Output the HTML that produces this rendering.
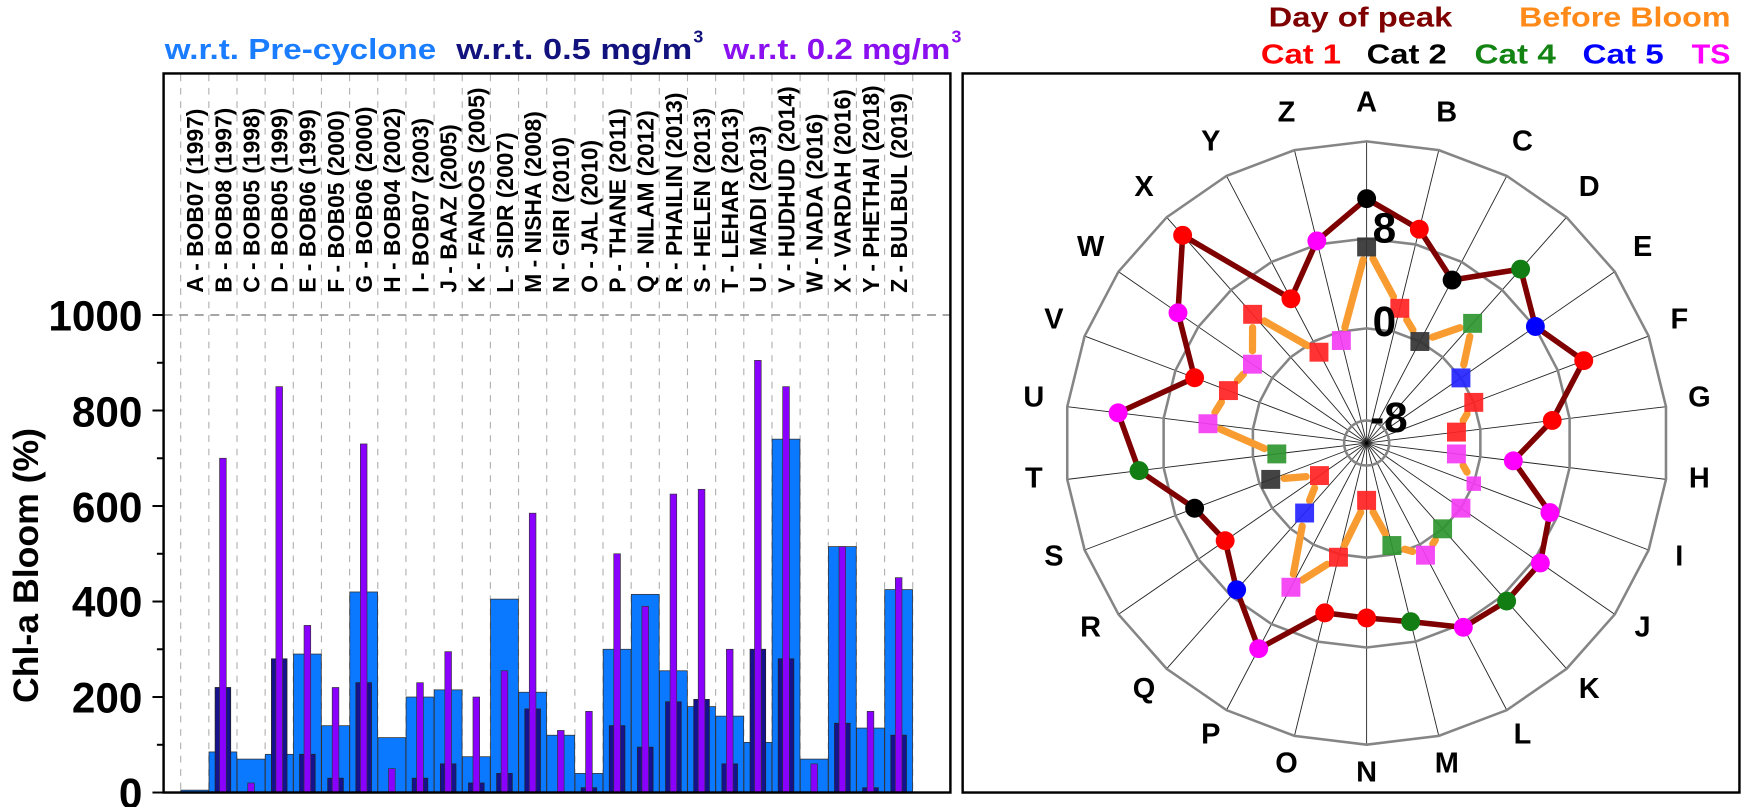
<!DOCTYPE html>
<html><head><meta charset="utf-8"><style>
html,body{margin:0;padding:0;background:#fff;overflow:hidden}
svg{display:block}
text{font-family:"Liberation Sans",Arial,sans-serif;font-weight:bold}
</style></head><body>
<svg id="s" width="1745" height="807" viewBox="0 0 1568 725" preserveAspectRatio="none" xmlns="http://www.w3.org/2000/svg">
<rect x="0" y="0" width="1568" height="725" fill="#fff"/>
<text x="148" y="53" font-size="26" fill="#1a7dff" textLength="244" lengthAdjust="spacingAndGlyphs">w.r.t. Pre-cyclone</text>
<text x="410" y="53" font-size="26" fill="#12127e" textLength="212" lengthAdjust="spacingAndGlyphs">w.r.t.  0.5 mg/m</text>
<text x="623" y="38" font-size="16" fill="#12127e">3</text>
<text x="650" y="53" font-size="26" fill="#8a10f0" textLength="204" lengthAdjust="spacingAndGlyphs">w.r.t. 0.2 mg/m</text>
<text x="855" y="38" font-size="16" fill="#8a10f0">3</text>
<text x="1140" y="24" font-size="25" fill="#7f0000" textLength="165" lengthAdjust="spacingAndGlyphs">Day of peak</text>
<text x="1365" y="24" font-size="25" fill="#ff8a1a" textLength="190" lengthAdjust="spacingAndGlyphs">Before Bloom</text>
<text x="1133" y="57" font-size="25" fill="#ff0000" textLength="72" lengthAdjust="spacingAndGlyphs">Cat 1</text>
<text x="1228" y="57" font-size="25" fill="#000" textLength="72" lengthAdjust="spacingAndGlyphs">Cat 2</text>
<text x="1325" y="57" font-size="25" fill="#138413" textLength="73" lengthAdjust="spacingAndGlyphs">Cat 4</text>
<text x="1422" y="57" font-size="25" fill="#0000ff" textLength="73" lengthAdjust="spacingAndGlyphs">Cat 5</text>
<text x="1520" y="57" font-size="25" fill="#ff00ff" textLength="35" lengthAdjust="spacingAndGlyphs">TS</text>

<g id="grid"></g>
<line x1="147" y1="283" x2="854" y2="283" stroke="#888" stroke-width="1.3" stroke-dasharray="8,6"/>
<g id="bars"></g>
<rect x="147" y="66" width="707" height="646" fill="none" stroke="#000" stroke-width="2.2"/>
<g id="ticks"></g>
<g font-size="38" text-anchor="end" fill="#000">
<text x="128" y="726">0</text>
<text x="128" y="640">200</text>
<text x="128" y="554">400</text>
<text x="128" y="469">600</text>
<text x="128" y="383">800</text>
<text x="128" y="297">1000</text>
</g>
<text transform="translate(34,508) rotate(-90)" font-size="32" text-anchor="middle">Chl-a Bloom (%)</text>
<g font-size="20.5" fill="#000">
<text transform="translate(182.5,263) rotate(-90)">A - BOB07 (1997)</text>
<text transform="translate(207.8,263) rotate(-90)">B - BOB08 (1997)</text>
<text transform="translate(233.1,263) rotate(-90)">C - BOB05 (1998)</text>
<text transform="translate(258.4,263) rotate(-90)">D - BOB05 (1999)</text>
<text transform="translate(283.7,263) rotate(-90)">E - BOB06 (1999)</text>
<text transform="translate(309,263) rotate(-90)">F - BOB05 (2000)</text>
<text transform="translate(334.3,263) rotate(-90)">G - BOB06 (2000)</text>
<text transform="translate(359.6,263) rotate(-90)">H - BOB04 (2002)</text>
<text transform="translate(384.9,263) rotate(-90)">I - BOB07 (2003)</text>
<text transform="translate(410.2,263) rotate(-90)">J - BAAZ (2005)</text>
<text transform="translate(435.5,263) rotate(-90)">K - FANOOS (2005)</text>
<text transform="translate(460.8,263) rotate(-90)">L - SIDR (2007)</text>
<text transform="translate(486.1,263) rotate(-90)">M - NISHA (2008)</text>
<text transform="translate(511.4,263) rotate(-90)">N - GIRI (2010)</text>
<text transform="translate(536.7,263) rotate(-90)">O - JAL (2010)</text>
<text transform="translate(562,263) rotate(-90)">P - THANE (2011)</text>
<text transform="translate(587.3,263) rotate(-90)">Q - NILAM (2012)</text>
<text transform="translate(612.6,263) rotate(-90)">R - PHAILIN (2013)</text>
<text transform="translate(637.9,263) rotate(-90)">S - HELEN (2013)</text>
<text transform="translate(663.2,263) rotate(-90)">T - LEHAR (2013)</text>
<text transform="translate(688.5,263) rotate(-90)">U - MADI (2013)</text>
<text transform="translate(713.8,263) rotate(-90)">V - HUDHUD (2014)</text>
<text transform="translate(739.1,263) rotate(-90)">W - NADA (2016)</text>
<text transform="translate(764.4,263) rotate(-90)">X - VARDAH (2016)</text>
<text transform="translate(789.7,263) rotate(-90)">Y - PHETHAI (2018)</text>
<text transform="translate(815,263) rotate(-90)">Z - BULBUL (2019)</text>
</g>

<rect x="865" y="66" width="698" height="646" fill="none" stroke="#000" stroke-width="2.2"/>
<g id="polar"></g>
<g font-size="38" fill="#000" text-anchor="middle">
<text x="1244" y="218">8</text>
<text x="1244" y="302">0</text>
<text x="1248" y="388">-8</text>
</g>
<g font-size="26" text-anchor="middle" fill="#000">
<text x="1228" y="100">A</text><text x="1300" y="109">B</text><text x="1368" y="135">C</text>
<text x="1428" y="176">D</text><text x="1476" y="230">E</text><text x="1509" y="295">F</text>
<text x="1527" y="365">G</text><text x="1527" y="438">H</text><text x="1509" y="508">I</text>
<text x="1476" y="572">J</text><text x="1428" y="627">K</text><text x="1368" y="668">L</text>
<text x="1300" y="694">M</text><text x="1228" y="702">N</text><text x="1156" y="694">O</text>
<text x="1088" y="668">P</text><text x="1028" y="627">Q</text><text x="980" y="572">R</text>
<text x="947" y="508">S</text><text x="929" y="438">T</text><text x="929" y="365">U</text>
<text x="947" y="295">V</text><text x="980" y="230">W</text><text x="1028" y="176">X</text>
<text x="1088" y="135">Y</text><text x="1156" y="109">Z</text>
</g>
</svg>
<script>
(function(){
var NS="http://www.w3.org/2000/svg";
function el(p,t,a){var e=document.createElementNS(NS,t);for(var k in a)e.setAttribute(k,a[k]);p.appendChild(e);return e;}
var grid=document.getElementById('grid'),bars=document.getElementById('bars'),ticks=document.getElementById('ticks');
var sp=25.3,x0=175;
for(var i=0;i<=26;i++){var x=x0+(i-0.5)*sp;if(x>148&&x<853)el(grid,'line',{x1:x,y1:67,x2:x,y2:711,stroke:'#b0b0b0','stroke-width':1,'stroke-dasharray':'6,6'});}
function Y(v){return 712-v*0.429;}
var blue=[5,85,70,80,290,140,420,115,200,215,75,405,210,120,40,300,415,255,180,160,105,740,70,515,135,425];
var navy=[0,220,0,280,80,30,230,0,30,60,20,40,175,0,10,140,95,190,195,60,300,280,0,145,10,120];
var purp=[0,700,20,850,350,220,730,50,230,295,200,255,585,130,170,500,390,625,635,300,905,850,60,515,170,450];
for(var i=0;i<26;i++){var c=x0+i*sp;
 if(blue[i]>0)el(bars,'rect',{x:c-12.5,y:Y(blue[i]),width:25,height:blue[i]*0.429,fill:'#0a78ff',stroke:'#333','stroke-width':0.7});
 if(navy[i]>0)el(bars,'rect',{x:c-7,y:Y(navy[i]),width:14,height:navy[i]*0.429,fill:'#16128f',stroke:'#222','stroke-width':0.7});
 if(purp[i]>0)el(bars,'rect',{x:c-3,y:Y(purp[i]),width:6,height:purp[i]*0.429,fill:'#8a00ff',stroke:'#333','stroke-width':0.6});
}
for(var v=0;v<=1000;v+=100){el(ticks,'line',{x1:v%200==0?137:141,y1:Y(v),x2:147,y2:Y(v),stroke:'#000','stroke-width':1.8});}
var P=document.getElementById('polar');var cx=1228,cy=398,R=271;
function pt(k,f){var a=k*2*Math.PI/26;return [cx+R*f*Math.sin(a),cy-R*f*Math.cos(a)];}
for(var k=0;k<26;k++){var p=pt(k,1);el(P,'line',{x1:cx,y1:cy,x2:p[0],y2:p[1],stroke:'#222','stroke-width':0.8});}
[1,0.678,0.38,0.075].forEach(function(f){var s=[];for(var k=0;k<26;k++){var p=pt(k,f);s.push(p[0].toFixed(1)+','+p[1].toFixed(1));}
 el(P,'polygon',{points:s.join(' '),fill:'none',stroke:'#858585','stroke-width':2.3});});
var rc=[0.81,0.73,0.61,0.77,0.68,0.77,0.62,0.49,0.65,0.70,0.70,0.69,0.61,0.58,0.58,0.77,0.65,0.57,0.61,0.76,0.83,0.61,0.76,0.92,0.54,0.69];
var rs=[0.65,0.46,0.38,0.53,0.38,0.38,0.30,0.30,0.38,0.38,0.38,0.42,0.35,0.19,0.39,0.54,0.31,0.19,0.34,0.30,0.53,0.49,0.46,0.57,0.34,0.35];
var cat="krkgbrrmmmgmgrrmbrkgmrmrrm";
var cc={k:'#000',r:'#ff0000',g:'#127d12',b:'#0000ff',m:'#ff00ff'};
var sc={k:'#333',r:'#f22',g:'#2f962f',b:'#2424ff',m:'#f43cf4'};
for(var k=0;k<26;k++){var a=pt(k,rs[k]),b=pt((k+1)%26,rs[(k+1)%26]);var dx=b[0]-a[0],dy=b[1]-a[1],L=Math.sqrt(dx*dx+dy*dy);if(L<26)continue;var ux=dx/L,uy=dy/L;
 el(P,'line',{x1:a[0]+ux*12,y1:a[1]+uy*12,x2:b[0]-ux*12,y2:b[1]-uy*12,stroke:'#f89c32','stroke-width':6.5,'stroke-linecap':'round'});}
var s=[];for(var k=0;k<26;k++){var p=pt(k,rc[k]);s.push(p[0].toFixed(1)+','+p[1].toFixed(1));}
el(P,'polygon',{points:s.join(' '),fill:'none',stroke:'#7f0000','stroke-width':5,'stroke-linejoin':'round'});
for(var k=0;k<26;k++){var p=pt(k,rs[k]);var z=(k==8)?13:17;
 el(P,'rect',{x:p[0]-z/2,y:p[1]-z/2,width:z,height:z,fill:sc[cat[k]],'fill-opacity':0.92});
 var q=pt(k,rc[k]);el(P,'circle',{cx:q[0],cy:q[1],r:8.5,fill:cc[cat[k]]});}
el(P,'circle',{cx:cx,cy:cy,r:1.5,fill:'#000'});
})();
</script>
</body></html>
